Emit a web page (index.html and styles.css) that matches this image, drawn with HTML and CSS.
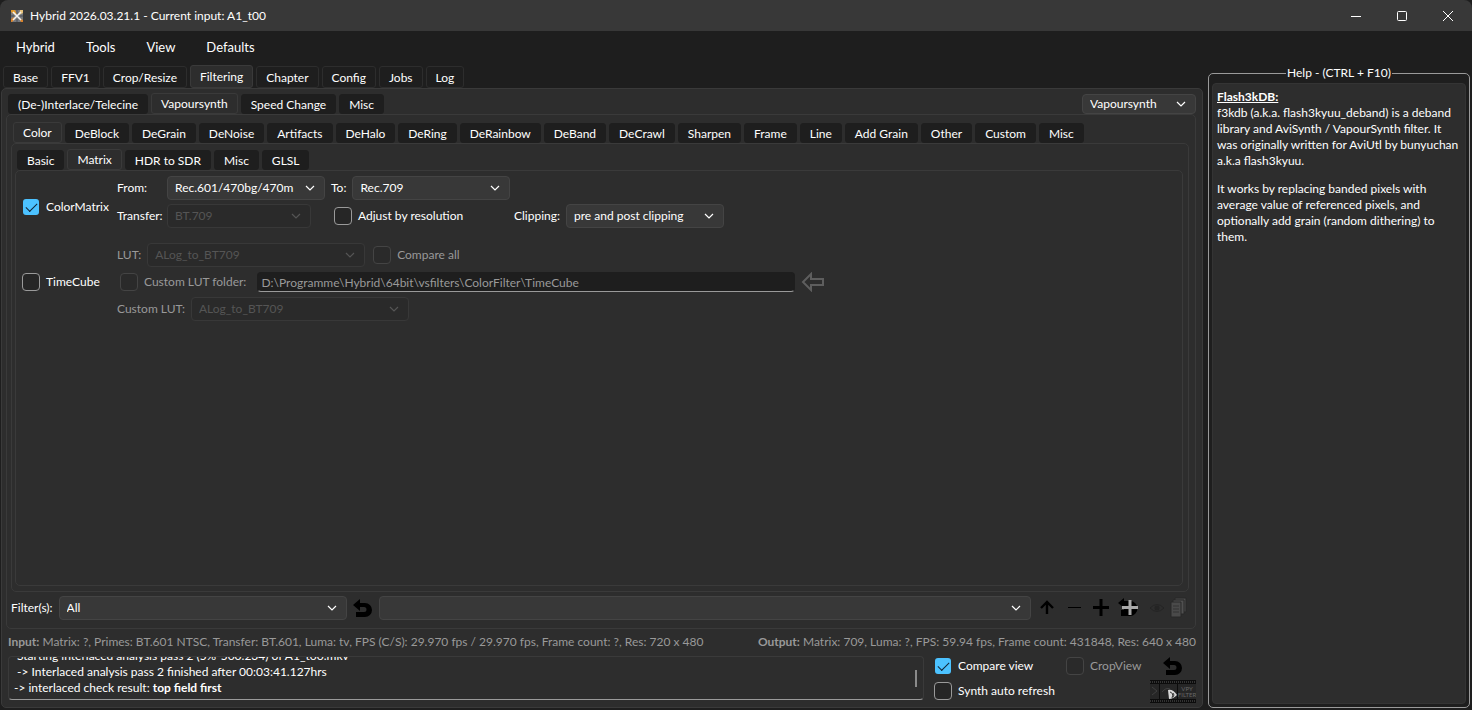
FILE: index.html
```html
<!DOCTYPE html>
<html lang="en">
<head>
    <meta charset="UTF-8">
    <meta name="viewport" content="width=device-width, initial-scale=1.0">
    <title>Hybrid 2026.03.21.1</title>
    <link rel="stylesheet" href="styles.css">
</head>
<body>

    <!-- Shared icons -->
    <svg class="sprite" aria-hidden="true">
        <symbol id="chevron" viewBox="0 0 10 6"><path d="M1 1l4 4 4-4" fill="none" stroke="currentColor" stroke-width="1.2"/></symbol>
        <symbol id="undo" viewBox="0 0 20 19"><path d="M0 6L7 0v4h5a7 7 0 0 1 0 14H3v-5h8a2.5 2.5 0 0 0 0-5H7v4z" fill="#000"/></symbol>
    </svg>

    <header class="titlebar">
        <svg class="logo" viewBox="0 0 14 14">
            <path d="M1 1h12v12H1z" fill="#77797d"/>
            <path d="M1 1h4l2 4-2 1-4-3z" fill="#e0982c"/>
            <path d="M10 1h3v3l-4 2z" fill="#e8c27a"/>
            <path d="M1 10l3-2 1 2-3 3H1z" fill="#d9832c"/>
            <path d="M9 9l4 2v2h-2z" fill="#d9832c"/>
            <path d="M3 3l8 8M11 3l-8 8" stroke="#f2f2f2" stroke-width="1.6"/>
            <path d="M7 1v4M1 7h3M7 10v3M10 7h3" stroke="#4b4f58"/>
        </svg>
        <span class="caption">Hybrid 2026.03.21.1 - Current input: A1_t00</span>
        <div class="window-buttons">
            <button aria-label="Minimize"><svg viewBox="0 0 12 12"><path d="M1 6.500h10"/></svg></button>
            <button aria-label="Maximize"><svg viewBox="0 0 12 12"><rect x="1.500" y="1.500" width="9" height="9" rx="1"/></svg></button>
            <button aria-label="Close"><svg viewBox="0 0 12 12"><path d="M1 1l10 10M11 1L1 11"/></svg></button>
        </div>
    </header>

    <div class="window">
        <main class="workspace">
            <nav class="menu">
                <button>Hybrid</button>
                <button>Tools</button>
                <button>View</button>
                <button>Defaults</button>
            </nav>

            <div class="tabs top-tabs">
                <button>Base</button>
                <button>FFV1</button>
                <button>Crop/Resize</button>
                <button class="active">Filtering</button>
                <button>Chapter</button>
                <button>Config</button>
                <button>Jobs</button>
                <button>Log</button>
            </div>

            <div class="panel main-panel">
                <div class="tab-row">
                    <div class="tabs">
                        <button>(De-)Interlace/Telecine</button>
                        <button class="active">Vapoursynth</button>
                        <button>Speed Change</button>
                        <button>Misc</button>
                    </div>
                    <span class="select engine">
                        <select aria-label="Engine"><option>Vapoursynth</option></select>
                        <svg><use href="#chevron"/></svg>
                    </span>
                </div>

                <div class="panel vs-panel">
                    <div class="tabs">
                        <button class="active">Color</button>
                        <button>DeBlock</button>
                        <button>DeGrain</button>
                        <button>DeNoise</button>
                        <button>Artifacts</button>
                        <button>DeHalo</button>
                        <button>DeRing</button>
                        <button>DeRainbow</button>
                        <button>DeBand</button>
                        <button>DeCrawl</button>
                        <button>Sharpen</button>
                        <button>Frame</button>
                        <button>Line</button>
                        <button>Add Grain</button>
                        <button>Other</button>
                        <button>Custom</button>
                        <button>Misc</button>
                    </div>

                    <div class="panel color-panel">
                        <div class="tabs">
                            <button>Basic</button>
                            <button class="active">Matrix</button>
                            <button>HDR to SDR</button>
                            <button>Misc</button>
                            <button>GLSL</button>
                        </div>

                        <div class="panel matrix-panel">
                            <!-- ColorMatrix -->
                            <section class="filter">
                                <label class="check toggle low"><input type="checkbox" checked>ColorMatrix</label>
                                <div class="options">
                                    <div class="row">
                                        <label class="name" for="from">From:</label>
                                        <span class="select medium">
                                            <select id="from"><option>Rec.601/470bg/470m</option></select>
                                            <svg><use href="#chevron"/></svg>
                                        </span>
                                        <label for="to">To:</label>
                                        <span class="select medium">
                                            <select id="to"><option>Rec.709</option></select>
                                            <svg><use href="#chevron"/></svg>
                                        </span>
                                    </div>
                                    <div class="row">
                                        <label class="name" for="transfer">Transfer:</label>
                                        <span class="select small">
                                            <select id="transfer" disabled><option>BT.709</option></select>
                                            <svg><use href="#chevron"/></svg>
                                        </span>
                                        <label class="check adjust"><input type="checkbox">Adjust by resolution</label>
                                        <label for="clipping">Clipping:</label>
                                        <span class="select medium">
                                            <select id="clipping"><option>pre and post clipping</option></select>
                                            <svg><use href="#chevron"/></svg>
                                        </span>
                                    </div>
                                </div>
                            </section>

                            <!-- TimeCube -->
                            <section class="filter">
                                <label class="check toggle"><input type="checkbox">TimeCube</label>
                                <div class="options cube dim">
                                    <div class="row">
                                        <label for="lut">LUT:</label>
                                        <span class="select large">
                                            <select id="lut" disabled><option>ALog_to_BT709</option></select>
                                            <svg><use href="#chevron"/></svg>
                                        </span>
                                        <label class="check compare"><input type="checkbox" disabled>Compare all</label>
                                    </div>
                                    <div class="row">
                                        <label class="check folder"><input type="checkbox" disabled>Custom LUT folder:</label>
                                        <input class="path" type="text" aria-label="Custom LUT folder" value="D:\Programme\Hybrid\64bit\vsfilters\ColorFilter\TimeCube" disabled>
                                        <button class="icon" aria-label="Browse" disabled>
                                            <svg class="arrow-left" viewBox="0 0 24 20"><path d="M2 10l8-8v5h12v6H10v5z" fill="none" stroke="#5e5e5e" stroke-width="2"/></svg>
                                        </button>
                                    </div>
                                    <div class="row">
                                        <label for="custom-lut">Custom LUT:</label>
                                        <span class="select large">
                                            <select id="custom-lut" disabled><option>ALog_to_BT709</option></select>
                                            <svg><use href="#chevron"/></svg>
                                        </span>
                                    </div>
                                </div>
                            </section>
                        </div>
                    </div>

                    <!-- Filter bar -->
                    <div class="filter-bar">
                        <label for="filters">Filter(s):</label>
                        <span class="select filter-list">
                            <select id="filters"><option>All</option></select>
                            <svg><use href="#chevron"/></svg>
                        </span>
                        <button class="icon" aria-label="Reset filter"><svg class="undo"><use href="#undo"/></svg></button>
                        <span class="select filter-entry">
                            <select aria-label="Filter entry"><option></option></select>
                            <svg><use href="#chevron"/></svg>
                        </span>
                        <div class="bar-icons">
                            <button class="icon" aria-label="Move up"><svg viewBox="0 0 20 20"><path d="M10 16V4M4 10l6-6 6 6" fill="none" stroke="#000" stroke-width="2.400"/></svg></button>
                            <button class="icon" aria-label="Remove"><svg viewBox="0 0 20 20"><path d="M4 9.500h13" stroke="#000"/></svg></button>
                            <button class="icon" aria-label="Add"><svg viewBox="0 0 20 20"><path d="M10 1v17M2 9.500h16" stroke="#000" stroke-width="3"/></svg></button>
                            <button class="icon" aria-label="Replace">
                                <svg viewBox="0 0 20 20"><path d="M0 5l6-5v3h6a7 7 0 0 1 0 15H3v-6h3V9H5z" fill="#000"/><path d="M12 2v15M4 9.500h16" stroke="#a8a8a8" stroke-width="3"/></svg>
                            </button>
                            <button class="icon" aria-label="Preview" disabled>
                                <svg class="eye" viewBox="0 0 16 20"><path d="M5 10q7-7 14 0-7 7-14 0z" fill="none" stroke="#242424"/><circle cx="12" cy="10" r="2.500" fill="#242424"/></svg>
                            </button>
                            <button class="icon" aria-label="Copy" disabled>
                                <svg viewBox="0 0 20 20"><path d="M7 0h11v14H7z" fill="#4b4b4b" stroke="#292929"/><path d="M5 2h11v14H5z" fill="#505050" stroke="#292929"/><path d="M3 4h10v15H3z" fill="#4a4a4a" stroke="#292929"/><path d="M5 8h6M5 11h6M5 14h6" stroke="#333"/></svg>
                            </button>
                        </div>
                    </div>
                </div>

                <div class="status">
                    <p><b>Input:</b> Matrix: ?, Primes: BT.601 NTSC, Transfer: BT.601, Luma: tv, FPS (C/S): 29.970 fps / 29.970 fps, Frame count: ?, Res: 720 x 480</p>
                    <p><b>Output:</b> Matrix: 709, Luma: ?, FPS: 59.94 fps, Frame count: 431848, Res: 640 x 480</p>
                </div>

                <div class="bottom">
                    <div class="log">
                        <p>&nbsp;Starting interlaced analysis pass 2 (5%-500.234) of A1_t00.mkv</p>
                        <p>&nbsp;-&gt; Interlaced analysis pass 2 finished after 00:03:41.127hrs</p>
                        <p>-&gt; interlaced check result: <b>top field first</b></p>
                        <span class="thumb"></span>
                    </div>
                    <div class="view-options">
                        <label class="check"><input type="checkbox" checked>Compare view</label>
                        <label class="check dim"><input type="checkbox" disabled>CropView</label>
                        <button class="icon" aria-label="Reset view"><svg class="undo"><use href="#undo"/></svg></button>
                        <label class="check refresh"><input type="checkbox">Synth auto refresh</label>
                        <button class="icon" aria-label="Filter preview">
                            <svg class="film" viewBox="0 0 46 23">
                                <rect width="46" height="23" fill="#0c0c0c"/>
                                <path d="M0 2h46M0 21h46" stroke="#333" stroke-width="2" stroke-dasharray="1 1"/>
                                <path d="M0 4h9v15H0zM10 4h17v15H10zM28 4h18v15H28z" fill="#262626"/>
                                <path d="M2 7l5 4-5 4M12 12q4-5 8-3" fill="none" stroke="#3f3f3f"/>
                                <path d="M18 10q5-1 9 5-4 4-8 4z" fill="#d8d8d8"/>
                                <path d="M20 12q4 1 2 6M23 13q2 2 0 4" fill="none" stroke="#333"/>
                                <text x="37" y="11" class="film-text">VPY</text>
                                <text x="37" y="17" class="film-text">FILTER</text>
                            </svg>
                        </button>
                    </div>
                </div>
            </div>
        </main>

        <fieldset class="help">
            <legend>Help - (CTRL + F10)</legend>
            <div class="help-text">
                <h2>Flash3kDB:</h2>
                <p>f3kdb (a.k.a. flash3kyuu_deband) is a deband library and AviSynth / VapourSynth filter. It was originally written for AviUtl by bunyuchan a.k.a flash3kyuu.</p>
                <p>It works by replacing banded pixels with average value of referenced pixels, and optionally add grain (random dithering) to them.</p>
            </div>
        </fieldset>
    </div>

</body>
</html>
```
FILE: styles.css
```css
* {
    box-sizing: border-box;
}
body {
    display: flex;
    flex-direction: column;
    height: 100vh;
    margin: 0;
    overflow: hidden;
    background: #1e1e1e;
    color: #fff;
    font: 12px/16px Lato, "Open Sans", sans-serif;
}
button, select, input {
    font: inherit;
    color: inherit;
}
button {
    padding: 0;
    border: 0;
    background: none;
    white-space: nowrap;
}
p, h2 {
    margin: 0;
}
.sprite {
    display: none;
}

/* Title bar */
.titlebar {
    display: flex;
    align-items: center;
    flex: none;
    height: 31px;
    padding: 0 1px 0 10px;
    border-radius: 8px 8px 0 0;
    background: #383838;
}
.logo {
    width: 14px;
    height: 14px;
    margin-right: 6px;
}
.window-buttons {
    display: flex;
    margin-left: auto;
}
.window-buttons button {
    width: 46px;
    height: 30px;
}
.window-buttons svg {
    width: 12px;
    height: 12px;
    fill: none;
    stroke: #fff;
    vertical-align: middle;
}

/* Window layout */
.window {
    display: flex;
    flex: 1;
    gap: 5px;
    min-height: 0;
    padding: 0 2px 2px 1px;
}
.workspace {
    display: flex;
    flex-direction: column;
    flex: 1;
    min-width: 0;
}
.menu {
    display: flex;
    gap: 31px;
    height: 34px;
    padding: 0 0 2px 15px;
    font-size: 13px;
}
.panel {
    border: 1px solid #3a3a3a;
    border-radius: 5px;
    background: #2d2d2d;
}

/* Tabs */
.tabs {
    display: flex;
    align-items: flex-end;
    gap: 3px;
    height: 21px;
}
.tabs button {
    height: 20px;
    padding: 1px 9px 0;
    border-radius: 3px;
    border: 1px solid #1e1e1e;
    background: #1e1e1e;
}
.tabs .active {
    height: 21px;
    padding-top: 0;
    border-color: #3a3a3a;
    background: #2d2d2d;
}
.top-tabs {
    height: 23px;
    padding-left: 2px;
}
.top-tabs button {
    height: 22px;
    border-color: #2d2d2d;
}
.top-tabs .active {
    height: 23px;
}
.main-panel {
    display: flex;
    flex-direction: column;
    flex: 1;
    min-height: 0;
    padding: 4px 6px 5px 4px;
}
.tab-row {
    display: flex;
    justify-content: space-between;
    padding-left: 2px;
}
.vs-panel {
    display: flex;
    flex-direction: column;
    flex: 1;
    padding: 7px 6px 8px 4px;
}
.vs-panel .tabs {
    padding-left: 2px;
}
.color-panel {
    display: flex;
    flex-direction: column;
    flex: 1;
    padding: 5px 5px 5px 3px;
}
.matrix-panel {
    flex: 1;
    padding: 5px 6px;
}

/* Filter options */
.filter {
    display: flex;
    margin-bottom: 15px;
}
.toggle {
    width: 95px;
}
.low {
    padding-top: 10px;
}
.options {
    display: grid;
    gap: 4px;
}
.cube {
    gap: 3px;
}
.row {
    display: flex;
    align-items: center;
    gap: 6px;
    height: 24px;
}
.name {
    width: 44px;
}
.adjust {
    width: 174px;
    margin-left: 17px;
}
.compare {
    margin-left: 2px;
}
.folder {
    margin: 0 5px 0 3px;
}
.dim {
    color: #999;
}
.path {
    width: 538px;
    height: 20px;
    padding: 0 3px;
    border: 1px solid #1e1e1e;
    border-bottom-color: #9a9a9a;
    border-radius: 4px;
    background: #1e1e1e;
}
.arrow-left {
    width: 24px;
    height: 20px;
}

/* Controls */
.check {
    display: flex;
    align-items: center;
    gap: 6px;
    white-space: nowrap;
}
.check input {
    flex: none;
    display: grid;
    place-items: center;
    appearance: none;
    width: 18px;
    height: 18px;
    margin: 0;
    border: 1px solid #9a9a9a;
    border-radius: 4px;
    background: #262626;
}
.check input:disabled {
    border-color: #444;
    background: #2a2a2a;
}
.check input:checked {
    border-color: transparent;
    background: #4cc2ff;
    background-clip: padding-box;
}
.check input:checked::before {
    content: "";
    width: 10px;
    height: 5px;
    margin-bottom: 3px;
    border: solid #123;
    border-width: 0 0 1px 1px;
    transform: rotate(-45deg);
}
.select {
    display: grid;
    align-items: center;
    flex: none;
}
.select select, .select svg {
    grid-area: 1 / 1;
}
.select select {
    appearance: none;
    width: 100%;
    height: 24px;
    padding: 0 24px 0 7px;
    border: 1px solid #444;
    border-radius: 4px;
    background: #383838;
    opacity: 1;
}
.select svg {
    justify-self: end;
    width: 10px;
    height: 6px;
    margin-right: 10px;
    pointer-events: none;
}
.select select:disabled {
    border-color: #383838;
    background: #2a2a2a;
    color: #555;
}
.select select:disabled + svg {
    color: #555;
}
.small {
    width: 144px;
}
.medium {
    width: 158px;
}
.large {
    width: 218px;
}
.engine {
    width: 114px;
}
.engine select {
    height: 20px;
}
.icon {
    display: flex;
}
.undo {
    width: 20px;
    height: 19px;
}

/* Filter bar */
.filter-bar {
    display: flex;
    align-items: center;
    gap: 6px;
    margin-top: 4px;
}
.filter-list {
    width: 288px;
}
.filter-entry {
    flex: 1;
}
.bar-icons {
    display: flex;
    gap: 7px;
    padding-right: 1px;
}
.bar-icons svg {
    width: 20px;
    height: 20px;
    overflow: visible;
}
.bar-icons .eye {
    width: 16px;
}

/* Status line and log */
.status {
    display: flex;
    justify-content: space-between;
    padding: 5px 0 6px 2px;
    color: #999;
    white-space: nowrap;
}
.bottom {
    display: flex;
    gap: 10px;
    padding-left: 2px;
}
.log {
    position: relative;
    display: flex;
    flex-direction: column;
    justify-content: flex-end;
    flex: 1;
    height: 44px;
    padding: 0 5px 3px;
    overflow: hidden;
    border: 1px solid #3a3a3a;
    border-bottom-color: #9a9a9a;
    border-radius: 4px;
}
.log p {
    flex: none;
}
.thumb {
    position: absolute;
    right: 6px;
    bottom: 12px;
    width: 2px;
    height: 17px;
    background: #8a8a8a;
}
.view-options {
    display: grid;
    grid-template-columns: 132px 84px 46px;
    grid-template-rows: 20px 22px;
    row-gap: 4px;
    align-items: center;
}
.view-options .icon {
    justify-content: center;
}
.refresh {
    grid-column: span 2;
}
.film {
    width: 46px;
    height: 23px;
}
.film-text {
    font-size: 6px;
    text-anchor: middle;
    fill: #666;
}

/* Help */
.help {
    display: flex;
    width: 262px;
    min-width: 0;
    margin: 34px 0 0;
    padding: 2px 3px 3px;
    border: 1px solid #9a9a9a;
    border-radius: 5px;
}
.help legend {
    margin: 0 auto;
    padding: 0 1px;
}
.help-text {
    flex: 1;
    padding: 5px 4px;
    border: 1px solid #343434;
    border-radius: 4px;
    background: #2d2d2d;
}
.help-text h2 {
    font-size: 12px;
    line-height: 16px;
    text-decoration: underline;
}
.help-text p + p {
    margin-top: 12px;
}
```
